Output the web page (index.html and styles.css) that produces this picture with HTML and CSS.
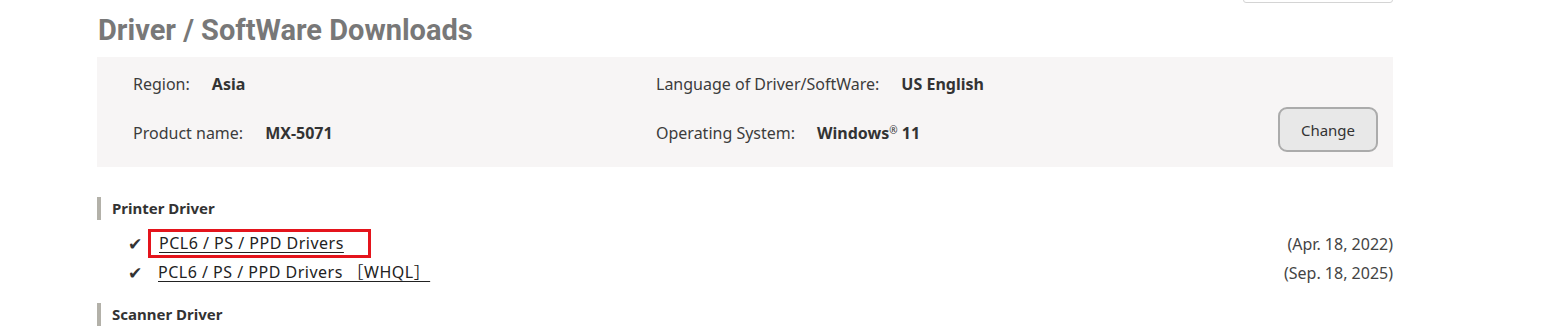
FILE: index.html
```html
<!DOCTYPE html>
<html lang="en">
<head>
    <meta charset="UTF-8">
    <title>Driver / SoftWare Downloads</title>
    <link rel="stylesheet" href="styles.css">
</head>
<body>
    <div class="page">
        <div class="top-select"></div>
        <h1 class="title">Driver / SoftWare Downloads</h1>

        <div class="conditions">
            <div class="cond-grid">
                <div class="cond"><span class="cond-label">Region:</span><strong>Asia</strong></div>
                <div class="cond"><span class="cond-label">Language of Driver/SoftWare:</span><strong>US English</strong></div>
                <div class="cond"><span class="cond-label">Product name:</span><strong>MX-5071</strong></div>
                <div class="cond"><span class="cond-label">Operating System:</span><strong>Windows<sup>®</sup> 11</strong></div>
            </div>
            <button class="change-btn">Change</button>
        </div>

        <h2 class="category">Printer Driver</h2>
        <ul class="downloads">
            <li>
                <span class="check">✔</span>
                <span class="highlighted"><a href="#" class="dl-link">PCL6 / PS / PPD Drivers</a></span>
                <span class="date">(Apr. 18, 2022)</span>
            </li>
            <li>
                <span class="check">✔</span>
                <a href="#" class="dl-link">PCL6 / PS / PPD Drivers ［WHQL］</a>
                <span class="date">(Sep. 18, 2025)</span>
            </li>
        </ul>

        <h2 class="category">Scanner Driver</h2>
    </div>
</body>
</html>
```

FILE: styles.css
```css
* {
    margin: 0;
    padding: 0;
    box-sizing: border-box;
}
body {
    font-family: "Noto Sans", "Noto Sans CJK JP", sans-serif;
    color: #333;
    background: #fff;
    font-size: 16px;
}
.page {
    width: 1296px;
    margin-left: 97px;
    position: relative;
}
.top-select {
    position: absolute;
    top: -10px;
    right: 0;
    width: 150px;
    height: 13px;
    border: 1px solid #d4d4d4;
    border-radius: 3px;
}
.title {
    font-family: Roboto, "Liberation Sans", sans-serif;
    font-size: 29px;
    font-weight: bold;
    color: #787878;
    line-height: 34px;
    padding-top: 13px;
    margin-bottom: 10px;
    margin-left: 1px;
}
.conditions {
    background: #f7f5f5;
    height: 110px;
    display: flex;
    align-items: center;
    padding: 0 15px 0 36px;
}
.cond-grid {
    flex: 1;
    display: grid;
    grid-template-columns: 523px 1fr;
    row-gap: 25px;
    margin-top: -7px;
}
.cond {
    line-height: 24px;
    color: #3c3c3c;
}
.cond-label {
    margin-right: 22px;
}
.cond strong {
    color: #333;
    font-weight: bold;
}
.cond sup {
    font-size: 10px;
    vertical-align: 5px;
    line-height: 0;
    font-weight: normal;
}
.change-btn {
    width: 100px;
    height: 45px;
    margin-top: 35px;
    font-family: inherit;
    font-size: 15px;
    color: #333;
    background: #e8e8e8;
    border: 2px solid #ababab;
    border-radius: 9px;
}
.category {
    font-size: 15px;
    font-weight: bold;
    color: #333;
    border-left: 4px solid #b3b1a9;
    padding-left: 11px;
    line-height: 23px;
    margin-top: 30px;
}
.downloads {
    list-style: none;
    margin-top: 9px;
}
.downloads li {
    display: flex;
    align-items: center;
    height: 29px;
    padding-left: 31px;
}
.check {
    width: 20px;
    color: #333;
    font-size: 17px;
    line-height: 20px;
}
.dl-link {
    color: #222;
    text-decoration: underline;
    text-underline-offset: 3px;
    line-height: 23px;
    letter-spacing: 0.5px;
}
.downloads li > .dl-link {
    margin-left: 10px;
}
.highlighted {
    border: 3px solid #e4141c;
    padding: 0 24px 0 8px;
    line-height: 23px;
    height: 29px;
    display: flex;
    align-items: center;
}
.date {
    margin-left: auto;
    color: #444;
}
.downloads + .category {
    margin-top: 16px;
}
```
